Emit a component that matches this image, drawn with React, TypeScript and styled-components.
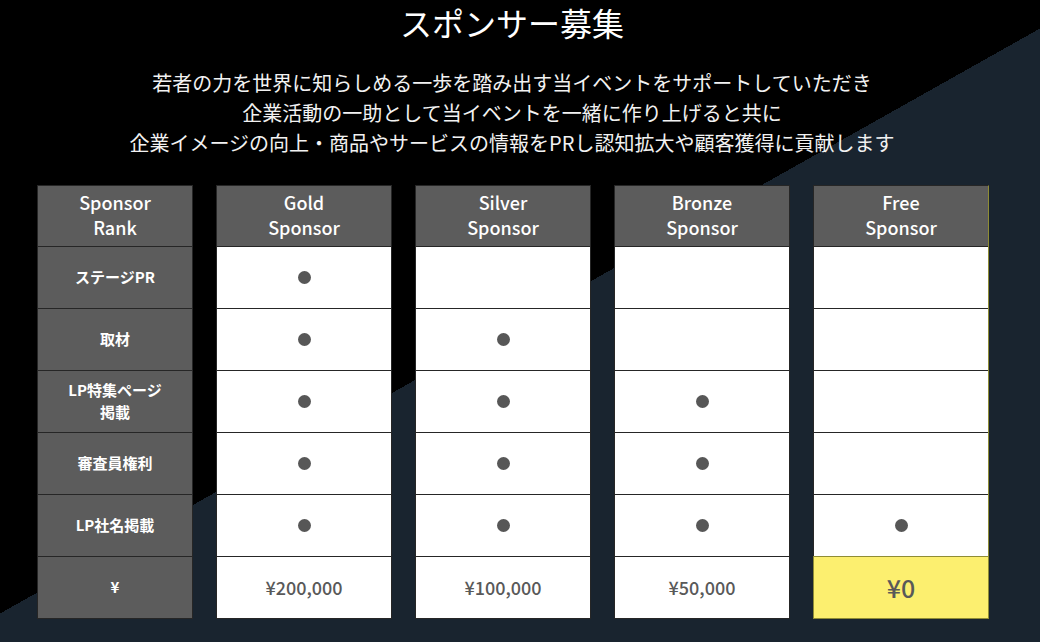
import styled, { createGlobalStyle } from 'styled-components';

const GlobalStyle = createGlobalStyle`
  html, body {
    margin: 0;
    padding: 0;
    background: #000;
  }
  * {
    box-sizing: border-box;
  }
`;

interface rankData {
  name: string[];
  marks: boolean[];
  price: string;
  isFree?: boolean;
}

const features: string[][] = [
  ['ステージPR'],
  ['取材'],
  ['LP特集ページ', '掲載'],
  ['審査員権利'],
  ['LP社名掲載'],
];

const ranks: rankData[] = [
  { name: ['Gold', 'Sponsor'], marks: [true, true, true, true, true], price: '¥200,000' },
  { name: ['Silver', 'Sponsor'], marks: [false, true, true, true, true], price: '¥100,000' },
  { name: ['Bronze', 'Sponsor'], marks: [false, false, true, true, true], price: '¥50,000' },
  { name: ['Free', 'Sponsor'], marks: [false, false, false, false, true], price: '¥0', isFree: true },
];

const lines = [
  '若者の力を世界に知らしめる一歩を踏み出す当イベントをサポートしていただき',
  '企業活動の一助として当イベントを一緒に作り上げると共に',
  '企業イメージの向上・商品やサービスの情報をPRし認知拡大や顧客獲得に貢献します',
];

function App() {
  return (
    <Page>
      <GlobalStyle />
      <Title>スポンサー募集</Title>
      <Lead>
        {lines.map((line) => (
          <span key={line}>{line}</span>
        ))}
      </Lead>
      <Table>
        <Column width={156}>
          <HeaderCell>
            <span>Sponsor</span>
            <span>Rank</span>
          </HeaderCell>
          {features.map((label, i) => (
            <LabelCell key={i}>
              {label.map((part) => (
                <span key={part}>{part}</span>
              ))}
            </LabelCell>
          ))}
          <LabelCell>¥</LabelCell>
        </Column>
        {ranks.map((rank) => (
          <Column key={rank.name[0]} width={176} isFree={rank.isFree}>
            <HeaderCell>
              {rank.name.map((part) => (
                <span key={part}>{part}</span>
              ))}
            </HeaderCell>
            {rank.marks.map((mark, i) => (
              <BodyCell key={i}>{mark && <Dot />}</BodyCell>
            ))}
            <PriceCell isFree={rank.isFree}>{rank.price}</PriceCell>
          </Column>
        ))}
      </Table>
    </Page>
  );
}

export default App;

const Page = styled.div`
  min-height: 100vh;
  width: 100%;
  padding-bottom: 23px;
  background: linear-gradient(150.64deg, #000 50%, #19242f 50%);
  font-family: 'Noto Sans CJK JP', 'Noto Sans', sans-serif;
  color: #fff;
  display: flex;
  flex-direction: column;
  align-items: center;
`;

const Title = styled.h1`
  margin: 0;
  font-size: 32px;
  line-height: 44px;
  font-weight: 400;
  color: #fff;
  transform: translateX(-8px);
`;

const Lead = styled.p`
  margin: 24px 0 0;
  display: flex;
  flex-direction: column;
  align-items: center;
  font-size: 20px;
  line-height: 30px;
  font-weight: 400;
  color: #f2f2f2;
  transform: translateX(-8px);
`;

const Table = styled.div`
  margin-top: 27px;
  align-self: flex-start;
  margin-left: 37px;
  display: flex;
  flex-direction: row;
  gap: 23px;
`;

const Column = styled.div<{ width: number; isFree?: boolean }>`
  width: ${(props) => props.width}px;
  display: flex;
  flex-direction: column;
  border: 1px solid #262626;
  border-right-color: ${(props) => (props.isFree ? '#8f8c35' : '#262626')};
`;

const HeaderCell = styled.div`
  height: 61px;
  display: flex;
  flex-direction: column;
  align-items: center;
  justify-content: center;
  background: #5c5c5c;
  border-bottom: 1px solid #262626;
  font-size: 18px;
  line-height: 25px;
  font-weight: 500;
  color: #fff;
  padding-bottom: 2px;
`;

const LabelCell = styled.div`
  height: 62px;
  display: flex;
  flex-direction: column;
  align-items: center;
  justify-content: center;
  background: #5c5c5c;
  border-bottom: 1px solid #262626;
  font-size: 15px;
  line-height: 22px;
  font-weight: 700;
  color: #fff;
  padding-bottom: 2px;

  &:last-child {
    border-bottom: none;
    height: 61px;
  }
`;

const BodyCell = styled.div`
  height: 62px;
  display: flex;
  align-items: center;
  justify-content: center;
  background: #fff;
  border-bottom: 1px solid #262626;
`;

const Dot = styled.span`
  width: 13px;
  height: 13px;
  border-radius: 50%;
  background: #575757;
`;

const PriceCell = styled.div<{ isFree?: boolean }>`
  height: 61px;
  display: flex;
  align-items: center;
  justify-content: center;
  padding-bottom: 2px;
  background: ${(props) => (props.isFree ? '#fcef6f' : '#fff')};
  outline: ${(props) => (props.isFree ? '1px solid #8f8c35' : 'none')};
  font-size: ${(props) => (props.isFree ? '25px' : '18px')};
  font-weight: 500;
  color: #595959;
`;
